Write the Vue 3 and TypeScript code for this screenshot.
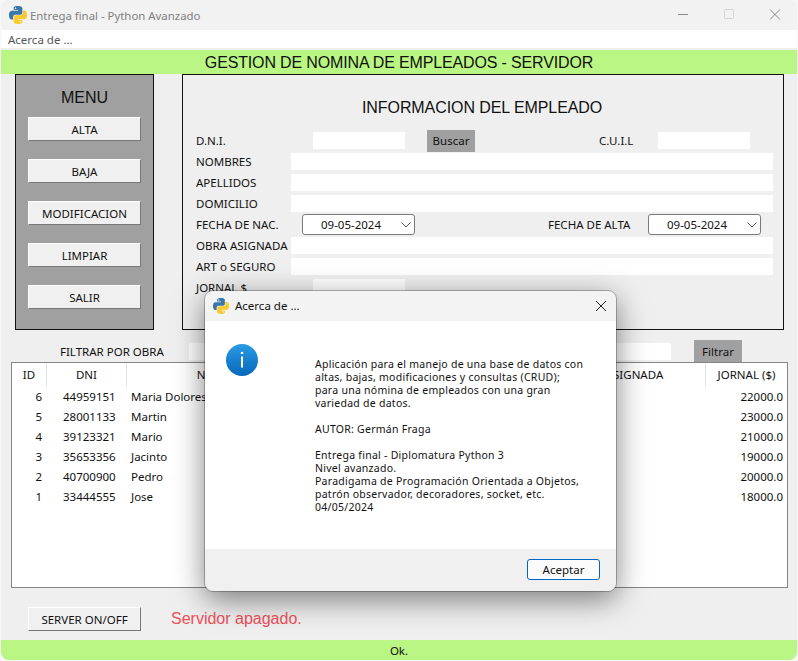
<script setup lang="ts">
const menuButtons = ['ALTA', 'BAJA', 'MODIFICACION', 'LIMPIAR', 'SALIR']

const columns = ['ID', 'DNI', 'NOMBRES', 'APELLIDOS', 'OBRA ASIGNADA', 'JORNAL ($)']

const employees = [
  { id: 6, dni: '44959151', name: 'Maria Dolores', pay: '22000.0' },
  { id: 5, dni: '28001133', name: 'Martin', pay: '23000.0' },
  { id: 4, dni: '39123321', name: 'Mario', pay: '21000.0' },
  { id: 3, dni: '35653356', name: 'Jacinto', pay: '19000.0' },
  { id: 2, dni: '40700900', name: 'Pedro', pay: '20000.0' },
  { id: 1, dni: '33444555', name: 'Jose', pay: '18000.0' },
]

const aboutLines = [
  'Aplicación para el manejo de una base de datos con',
  'altas, bajas, modificaciones y consultas (CRUD);',
  'para una nómina de empleados con una gran',
  'variedad de datos.',
  '',
  'AUTOR: Germán Fraga',
  '',
  'Entrega final - Diplomatura Python 3',
  'Nivel avanzado.',
  'Paradigama de Programación Orientada a Objetos,',
  'patrón observador, decoradores, socket, etc.',
  '04/05/2024',
]

const pythonBlue =
  'M54.9 0C26.8 0 28.6 12.2 28.6 12.2v12.6h26.8v3.8H17.9S0 26.6 0 54.9s15.6 27.3 15.6 27.3h9.3V69s-.5-15.6 15.4-15.6h26.4s14.9.2 14.9-14.4V14.8S83.9 0 54.9 0zM40.2 8.5a4.8 4.8 0 1 1 0 9.6 4.8 4.8 0 0 1 0-9.6z'
</script>

<template>
  <div class="window">
    <div class="titlebar">
      <svg class="py-icon" viewBox="0 0 110 110" width="18" height="18">
        <path :d="pythonBlue" fill="#3a76a8" />
        <path :d="pythonBlue" fill="#fbc92e" transform="rotate(180 55 55)" />
      </svg>
      <span class="titlebar__text">Entrega final - Python Avanzado</span>
      <div class="win-controls">
        <svg width="46" height="30" viewBox="0 0 46 30"><path d="M18 14.5h10" stroke="#8a8a8a" fill="none" /></svg>
        <svg width="46" height="30" viewBox="0 0 46 30"><rect x="18.5" y="9.5" width="9" height="9" rx="1" stroke="#d4d4d4" fill="none" /></svg>
        <svg width="46" height="30" viewBox="0 0 46 30"><path d="M18 9.5l10 10M28 9.5l-10 10" stroke="#8a8a8a" fill="none" /></svg>
      </div>
    </div>
    <div class="menubar">Acerca de ...</div>
    <div class="banner">GESTION DE NOMINA DE EMPLEADOS - SERVIDOR</div>

    <div class="top">
      <aside class="menu-panel">
        <h2>MENU</h2>
        <button v-for="label in menuButtons" :key="label" class="raised" type="button">{{ label }}</button>
      </aside>

      <section class="info-panel">
        <h2>INFORMACION DEL EMPLEADO</h2>
        <div class="row">
          <span class="label label--short">D.N.I.</span>
          <span class="input input--small"></span>
          <button class="flat flat--search" type="button">Buscar</button>
          <span class="label label--cuil">C.U.I.L</span>
          <span class="input input--small"></span>
        </div>
        <div class="row"><span class="label">NOMBRES</span><span class="input input--wide"></span></div>
        <div class="row"><span class="label">APELLIDOS</span><span class="input input--wide"></span></div>
        <div class="row"><span class="label">DOMICILIO</span><span class="input input--wide"></span></div>
        <div class="row">
          <span class="label label--date">FECHA DE NAC.</span>
          <span class="date">
            09-05-2024
            <svg width="10" height="6" viewBox="0 0 10 6"><path d="M.5.5 5 5 9.5.5" stroke="#555" fill="none" /></svg>
          </span>
          <span class="label label--alta">FECHA DE ALTA</span>
          <span class="date">
            09-05-2024
            <svg width="10" height="6" viewBox="0 0 10 6"><path d="M.5.5 5 5 9.5.5" stroke="#555" fill="none" /></svg>
          </span>
        </div>
        <div class="row"><span class="label">OBRA ASIGNADA</span><span class="input input--wide"></span></div>
        <div class="row"><span class="label">ART o SEGURO</span><span class="input input--wide"></span></div>
        <div class="row">
          <span class="label label--short">JORNAL $</span>
          <span class="input input--small"></span>
        </div>
      </section>
    </div>

    <div class="filter">
      <span class="filter__label">FILTRAR POR OBRA</span>
      <span class="input filter__input"></span>
      <button class="flat flat--filter" type="button">Filtrar</button>
    </div>

    <div class="table">
      <div class="table__head">
        <span v-for="col in columns" :key="col">{{ col }}</span>
      </div>
      <div v-for="emp in employees" :key="emp.id" class="table__row">
        <span class="cell-id">{{ emp.id }}</span>
        <span class="cell-dni">{{ emp.dni }}</span>
        <span class="cell-name">{{ emp.name }}</span>
        <span></span>
        <span></span>
        <span class="cell-pay">{{ emp.pay }}</span>
      </div>
    </div>

    <div class="server">
      <button class="raised" type="button">SERVER ON/OFF</button>
      <span class="server__state">Servidor apagado.</span>
    </div>

    <div class="status">Ok.</div>

    <div class="dialog">
      <div class="dialog__title">
        <svg viewBox="0 0 110 110" width="16" height="16">
          <path :d="pythonBlue" fill="#3a76a8" />
          <path :d="pythonBlue" fill="#fbc92e" transform="rotate(180 55 55)" />
        </svg>
        <span>Acerca de ...</span>
        <svg class="dialog__close" width="12" height="12" viewBox="0 0 12 12"><path d="M1 1l10 10M11 1 1 11" stroke="#222" fill="none" /></svg>
      </div>
      <div class="dialog__body">
        <svg class="info-icon" width="32" height="32" viewBox="0 0 32 32">
          <defs>
            <linearGradient id="infoFill" x1="0" y1="0" x2="0" y2="1">
              <stop offset="0" stop-color="#2a9be4" />
              <stop offset="1" stop-color="#0767bb" />
            </linearGradient>
          </defs>
          <circle cx="16" cy="16" r="16" fill="url(#infoFill)" />
          <circle cx="16" cy="9" r="1.3" fill="#fff" />
          <rect x="15" y="12.5" width="2" height="11" fill="#fff" />
        </svg>
        <div class="dialog__text">
          <div v-for="(line, i) in aboutLines" :key="i" class="dialog__line">{{ line }}</div>
        </div>
      </div>
      <div class="dialog__footer">
        <button class="accept" type="button">Aceptar</button>
      </div>
    </div>
  </div>
</template>

<style scoped>
.window {
  position: relative;
  width: 796px;
  height: 660px;
  margin-left: 1px;
  border-radius: 8px;
  overflow: hidden;
  background: #efefef;
  color: #111;
  font-family: "Noto Sans", sans-serif;
  font-size: 11.5px;
}

.titlebar {
  height: 30px;
  background: #f2f2f2;
  display: flex;
  align-items: center;
  padding-left: 8px;
}

.py-icon {
  margin-right: 3px;
}

.titlebar__text {
  color: #7f7f7f;
  font-size: 11.4px;
}

.win-controls {
  margin-left: auto;
  margin-right: -1px;
  display: flex;
}

.menubar {
  height: 18px;
  background: #fff;
  padding-left: 7px;
  line-height: 19px;
  color: #555;
}

.banner {
  margin-top: 2px;
  height: 24px;
  line-height: 25px;
  background: #b9f683;
  text-align: center;
  font-family: "Liberation Sans", sans-serif;
  font-size: 16px;
  letter-spacing: -0.15px;
}

.top {
  display: flex;
  height: 256px;
  padding-left: 14px;
}

.menu-panel {
  width: 139px;
  box-sizing: border-box;
  border: 1px solid #111;
  background: #a0a0a0;
  display: flex;
  flex-direction: column;
  align-items: center;
  gap: 18px;
}

.menu-panel h2 {
  margin: 13px 0 -8px;
  font: 400 16px/19px "Liberation Sans", sans-serif;
}

.raised {
  width: 113px;
  height: 24px;
  flex: none;
  padding: 0;
  box-sizing: border-box;
  border: 1px solid;
  border-color: #fff #777 #777 #fff;
  background: #f0f0f0;
  color: #111;
  font: inherit;
}

.info-panel {
  margin-left: 28px;
  width: 602px;
  box-sizing: border-box;
  border: 1px solid #111;
  padding-left: 13px;
}

.info-panel h2 {
  margin: 0;
  height: 55px;
  padding-top: 23px;
  padding-left: 166px;
  box-sizing: border-box;
  font: 400 16px/19px "Liberation Sans", sans-serif;
  letter-spacing: -0.08px;
}

.row {
  height: 21px;
  display: flex;
  align-items: center;
  white-space: nowrap;
}

.label {
  width: 95px;
  flex: none;
}

.label--short {
  width: 117px;
}

.label--date {
  width: 106px;
}

.label--cuil {
  width: 59px;
  margin-left: 124px;
}

.label--alta {
  width: 100px;
  margin-left: 133px;
}

.input {
  display: block;
  height: 17px;
  background: #fff;
  flex: none;
}

.input--small {
  width: 92px;
}

.input--wide {
  width: 482px;
}

.flat {
  padding: 0;
  border: 0;
  background: #a0a0a0;
  color: #111;
  font: inherit;
  height: 22px;
  width: 48px;
  flex: none;
}

.flat--search {
  margin-left: 22px;
}

.date {
  position: relative;
  width: 113px;
  height: 21px;
  box-sizing: border-box;
  flex: none;
  border: 1px solid #7a7a7a;
  border-radius: 3px;
  background: #fff;
  padding-left: 18px;
  line-height: 19px;
}

.date svg {
  position: absolute;
  right: 3px;
  top: 7px;
}

.filter {
  height: 22px;
  padding-top: 10px;
  display: flex;
  align-items: center;
  padding-left: 59px;
}

.filter__label {
  width: 129px;
  flex: none;
}

.filter__input {
  width: 482px;
}

.flat--filter {
  margin-left: 23px;
}

.table {
  margin-left: 10px;
  width: 777px;
  height: 226px;
  box-sizing: border-box;
  border: 1px solid #858585;
  background: #fff;
}

.table__head,
.table__row {
  display: grid;
  grid-template-columns: 35px 80px 196px 207px 176px 81px;
}

.table__head {
  height: 24px;
  line-height: 23px;
  text-align: center;
}

.table__head span {
  border-right: 1px solid #e4e4e4;
}

.table__head span:last-child {
  border-right: 0;
}

.table__row {
  height: 20px;
  line-height: 20px;
}

.cell-id {
  text-align: right;
  padding-right: 5px;
}

.cell-dni {
  padding-left: 16px;
}

.cell-name {
  padding-left: 4px;
}

.cell-pay {
  text-align: right;
  padding-right: 4px;
}

.server {
  height: 24px;
  padding: 19px 0 9px 27px;
  display: flex;
  align-items: center;
}

.server__state {
  margin-left: 30px;
  color: #f0505a;
  font-family: "Liberation Sans", sans-serif;
  font-size: 16px;
}

.status {
  height: 20px;
  line-height: 21px;
  background: #b9f683;
  text-align: center;
}

.dialog {
  position: absolute;
  left: 204px;
  top: 291px;
  width: 411px;
  height: 300px;
  border-radius: 8px;
  display: flex;
  flex-direction: column;
  background: #fff;
  outline: 1px solid rgba(0, 0, 0, 0.25);
  box-shadow: 0 8px 30px rgba(0, 0, 0, 0.5);
  overflow: clip;
  overflow-clip-margin: 0;
}

.dialog__title {
  height: 29px;
  padding: 0 9px 1px 8px;
  flex: none;
  background: #f3f3f3;
  display: flex;
  align-items: center;
  gap: 6px;
  font-size: 11.5px;
  color: #111;
}

.dialog__close {
  margin-left: auto;
}

.dialog__body {
  flex: 1;
  position: relative;
  padding: 37px 0 0 110px;
}

.info-icon {
  position: absolute;
  left: 21px;
  top: 23px;
}

.dialog__text {
  letter-spacing: 0.26px;
  font-size: 10.5px;
}

.dialog__line {
  height: 13px;
  line-height: 13px;
  white-space: nowrap;
}

.dialog__footer {
  height: 42px;
  padding-bottom: 2px;
  box-sizing: border-box;
  flex: none;
  background: #f0f0f0;
  display: flex;
  align-items: center;
  justify-content: flex-end;
  padding-right: 16px;
}

.accept {
  width: 73px;
  height: 21px;
  padding: 0;
  box-sizing: border-box;
  border: 1px solid #0067c0;
  border-radius: 3px;
  background: #fbfbfb;
  color: #111;
  font: inherit;
}
</style>

<style>
html,
body {
  background: #f7f7f7;
}
</style>
